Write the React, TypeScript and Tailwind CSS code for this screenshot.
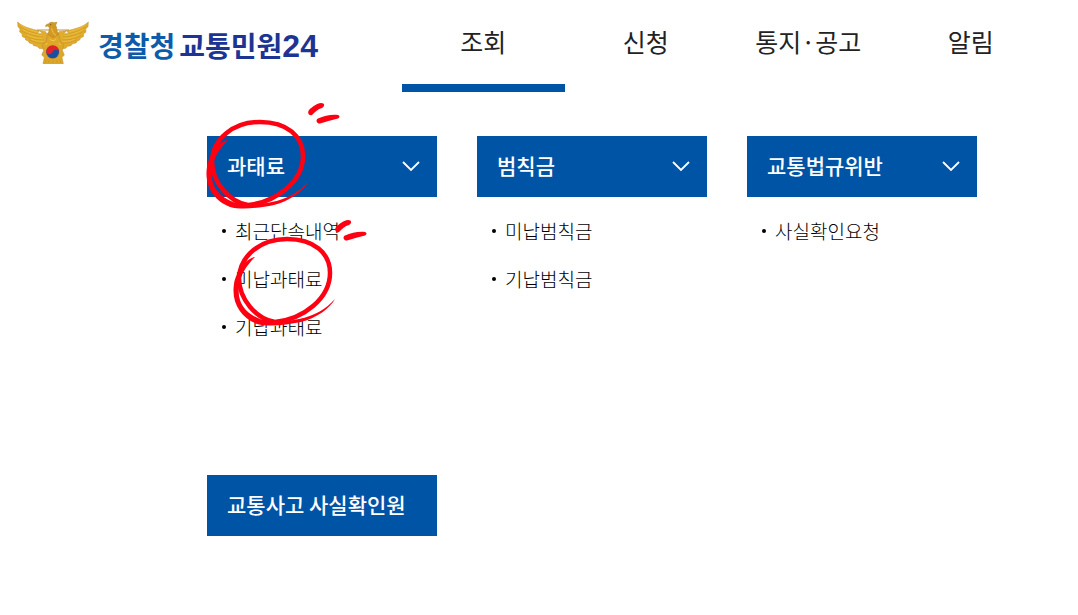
import { useState } from "react";

interface MenuLink {
  label: string;
  marked?: boolean;
}

interface MenuGroup {
  title: string;
  expandable: boolean;
  marked?: boolean;
  links: MenuLink[];
}

const navItems = ["조회", "신청", "통지·공고", "알림"];

const menuGroups: MenuGroup[] = [
  {
    title: "과태료",
    expandable: true,
    marked: true,
    links: [
      { label: "최근단속내역" },
      { label: "미납과태료", marked: true },
      { label: "기납과태료" },
    ],
  },
  {
    title: "범칙금",
    expandable: true,
    links: [{ label: "미납범칙금" }, { label: "기납범칙금" }],
  },
  {
    title: "교통법규위반",
    expandable: true,
    links: [{ label: "사실확인요청" }],
  },
  { title: "교통사고 사실확인원", expandable: false, links: [] },
];

function Emblem() {
  return (
    <svg viewBox="0 0 216 129" className="h-[43px] w-[72px] shrink-0" aria-hidden="true">
      {/* Wings */}
      <g fill="#e2ad2b" stroke="#b98a35" strokeWidth="1.5" strokeLinejoin="round">
        <path d="M2 3 C18 18 38 22 56 27 L86 32 L92 46 L82 84 L66 82 L60 76 L50 74 L46 68 L37 66 L34 60 L26 57 L24 50 L16 47 L15 38 L8 33 L9 24 L3 17 Z" />
        <path d="M214 3 C198 18 178 22 160 27 L126 32 L120 46 L130 84 L146 82 L152 76 L162 74 L167 68 L177 66 L181 60 L188 57 L191 50 L199 47 L200 38 L207 33 L206 24 L213 17 Z" />
      </g>
      <g fill="none" stroke="#c79629" strokeWidth="2" strokeLinecap="round">
        <path d="M9 17 C26 31 46 35 70 40 M14 30 C32 41 50 45 76 48 M25 45 C42 54 58 57 80 57 M37 57 C52 64 64 68 82 66" />
        <path d="M207 17 C190 31 170 35 146 40 M201 30 C184 41 166 45 140 48 M190 45 C174 54 158 57 136 57 M178 57 C164 64 152 68 134 66" />
      </g>
      <g fill="none" stroke="#f0c647" strokeWidth="2" strokeLinecap="round">
        <path d="M12 12 C30 25 48 29 64 34 M18 26 C36 36 54 40 72 44 M30 41 C44 49 60 52 76 52 M44 55 C56 60 68 62 80 61" />
        <path d="M204 12 C186 25 168 29 152 34 M198 26 C180 36 162 40 144 44 M186 41 C172 49 156 52 140 52 M172 55 C160 60 148 62 136 61" />
      </g>
      {/* Scale bar */}
      <path d="M60 27 H156" stroke="#c4933a" strokeWidth="3" />
      <path d="M68 29 L61 38 H77 Z M148 29 L140 38 H156 Z" fill="#fbf1d5" stroke="#c4933a" strokeWidth="1.5" />
      {/* Body and tail */}
      <path
        d="M92 36 L124 36 L130 60 L141 72 L136 88 L142 102 L135 109 L139 128 H78 L82 109 L74 102 L80 88 L75 72 L88 60 Z"
        fill="#dea728"
        stroke="#b98a35"
        strokeWidth="1.5"
        strokeLinejoin="round"
      />
      <path
        d="M86 17 C85 12 89 9 94 9 C98 4 105 2 110 5 L120 4 L116 12 C120 20 119 30 124 40 L108 50 L92 40 C96 32 98 24 96 17 L90 15 Z"
        fill="#d29a22"
        stroke="#b07f25"
        strokeWidth="1.5"
        strokeLinejoin="round"
      />
      <circle cx="101" cy="11" r="2" fill="#7a5518" />
      <path d="M104 22 C106 32 110 40 117 43" fill="none" stroke="#f0c648" strokeWidth="3" />
      <path d="M88 115 L84 126 M97 117 L95 126 M108 118 V126 M119 117 L121 126 M128 115 L132 126" stroke="#c79629" strokeWidth="2" />
      <path d="M98 54 C104 60 112 60 118 54 M86 72 L91 66 M130 72 L125 66" fill="none" stroke="#f5cd50" strokeWidth="3" />
      {/* Taegeuk */}
      <circle cx="107" cy="93" r="21" fill="#c99227" />
      <circle cx="107" cy="93" r="19" fill="#174fa2" />
      <path d="M88 95 A19 19 0 0 1 126 90 C120 84 110 85 107 93 C104 101 94 102 88 95 Z" fill="#e5202c" />
    </svg>
  );
}

function Chevron() {
  return (
    <svg viewBox="0 0 18 12" className="h-3 w-[18px] shrink-0" aria-hidden="true">
      <path d="M1 1 L9 9 L17 1" fill="none" stroke="#fff" strokeWidth="1.8" />
    </svg>
  );
}

// Hand-drawn red circle with two accent ticks
function PenMark({ className }: { className: string }) {
  return (
    <svg
      viewBox="0 0 145 115"
      className={`pointer-events-none absolute z-10 h-[115px] w-[145px] ${className}`}
      fill="#ff0012"
      aria-hidden="true"
    >
      <path
        d="M48 107 C29 104 12 84 12 63 C13 41 33 24 60 24 C87 24 103 38 103 58 C103 83 77 104 48 107 Z"
        fill="none"
        stroke="#ff0012"
        strokeWidth="4.5"
      />
      <path d="M28 42 C20 43 9 56 7 69 C4 88 14 103 30 109 C41 112 60 110 74 107 C90 103 103 93 108 84 C99 94 87 101 72 104 C58 107 42 107 33 104 C18 98 10 87 12 72 C13 60 20 50 28 42 Z" />
      <path d="M109 12 C112 9 117 5 121 5 C125 5 125 8 122 10 C118 11 115 14 112 17 C109 18 107 15 109 12 Z" />
      <path d="M118 20.5 C124 18 132 16 138 17 C141 18 139 21 136 21 C131 22 126 24 120 25.5 C117 26 115 22 118 20.5 Z" />
    </svg>
  );
}

function MenuSection({ group }: { group: MenuGroup }) {
  const [isOpen, setIsOpen] = useState(true);

  return (
    <section>
      <h2 className="relative text-[21px] font-medium text-white">
        <button
          type="button"
          onClick={() => group.expandable && setIsOpen(!isOpen)}
          className="flex h-[61px] w-full items-center justify-between bg-[#0054a6] pr-[17px] pl-5 text-left"
        >
          <span className="pb-0.5">{group.title}</span>
          {group.expandable && <Chevron />}
        </button>
        {group.marked && <PenMark className="-top-[38px] -left-[7px]" />}
      </h2>
      {isOpen && group.links.length > 0 && (
        <ul className="pt-2.5">
          {group.links.map((link) => (
            <li key={link.label} className="relative flex h-12 items-center gap-[9px] pl-[15px]">
              <span className="h-1 w-1 rounded-full bg-black" />
              <a href="#" className="text-[19px] font-light text-black">
                {link.label}
              </a>
              {link.marked && <PenMark className="-top-10 left-5" />}
            </li>
          ))}
        </ul>
      )}
    </section>
  );
}

export default function App() {
  const [active, setActive] = useState("조회");

  return (
    <div className="min-h-screen bg-white font-['Noto_Sans_CJK_KR',sans-serif] text-[#222]">
      <header className="flex h-[92px] pr-[26px]">
        <a href="#" className="flex w-[402px] shrink-0 items-start gap-[9px] pt-[21px] pl-[17px]">
          <Emblem />
          <span className="flex gap-1 pt-[3px] text-[28px] leading-[42px] font-bold whitespace-nowrap">
            <span className="text-[#0c5cab]">경찰청</span>
            <span className="text-[#1c3494]">
              교통민원
              <span className="font-['Liberation_Sans',sans-serif] text-[32px]">24</span>
            </span>
          </span>
        </a>
        <nav className="grid flex-1 grid-cols-4">
          {navItems.map((item) => (
            <button
              key={item}
              type="button"
              onClick={() => setActive(item)}
              className={`border-b-8 text-[25px] ${
                active === item ? "border-[#0054a6]" : "border-transparent"
              }`}
            >
              {item}
            </button>
          ))}
        </nav>
      </header>

      <main className="grid grid-cols-3 gap-x-10 gap-y-[124px] pt-11 pr-[101px] pb-20 pl-[207px]">
        {menuGroups.map((group) => (
          <MenuSection key={group.title} group={group} />
        ))}
      </main>
    </div>
  );
}
